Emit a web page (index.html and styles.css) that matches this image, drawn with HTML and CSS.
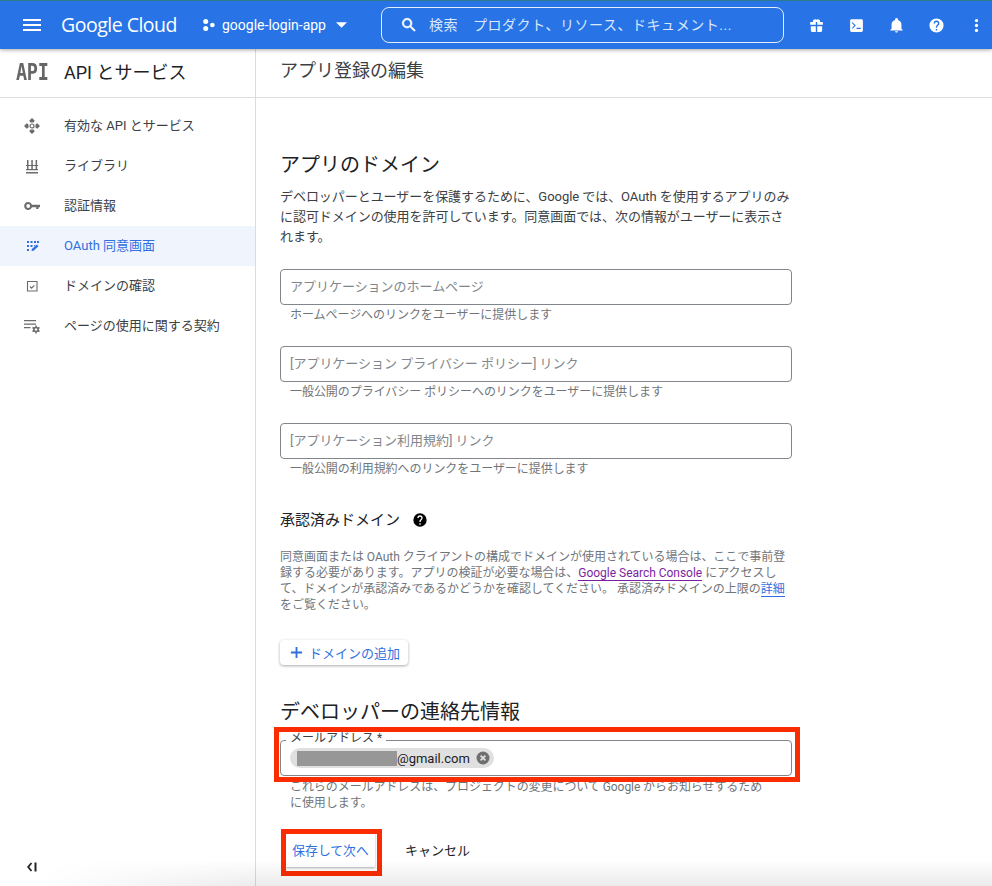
FILE: index.html
```html
<!DOCTYPE html>
<html lang="ja">
<head>
<meta charset="utf-8">
<title>アプリ登録の編集</title>
<link rel="stylesheet" href="styles.css">
</head>
<body>
<header class="topbar">
  <svg class="menu-icon" viewBox="0 0 18 12"><path d="M0 0h18v2H0zM0 5h18v2H0zM0 10h18v2H0z" fill="#fff"/></svg>
  <span class="logo">Google Cloud</span>
  <div class="project">
    <svg class="project-icon" viewBox="0 0 14 14"><circle cx="4" cy="3.200" r="2.700" fill="#fff"/><circle cx="4" cy="10.800" r="2.700" fill="#fff"/><circle cx="11.200" cy="7" r="2.500" fill="#fff"/></svg>
    <span class="project-name">google-login-app</span>
    <svg class="caret" viewBox="0 0 12 6"><path d="M0 0h12L6 6z" fill="#fff"/></svg>
  </div>
  <div class="search">
    <svg class="search-icon" viewBox="0 0 24 24"><path d="M15.500 14h-.79l-.28-.27A6.470 6.470 0 0 0 16 9.500 6.500 6.500 0 1 0 9.500 16c1.610 0 3.090-.59 4.230-1.570l.27.28v.79l5 4.990L20.490 19l-4.990-5zm-6 0C7.010 14 5 11.990 5 9.500S7.010 5 9.500 5 14 7.010 14 9.500 11.990 14 9.500 14z" fill="#fff" stroke="#fff" stroke-width=".8"/></svg>
    <span class="search-text">検索&emsp;プロダクト、リソース、ドキュメント...</span>
  </div>
  <div class="top-actions">
    <svg viewBox="0 0 24 24"><path d="M20 7h-3.200c.1-.3.200-.7.200-1 0-1.700-1.300-3-3-3-1 0-1.500.4-2 1-.5-.6-1-1-2-1-1.700 0-3 1.300-3 3 0 .3.100.7.200 1H4C2.900 7 3 8 3 9v2h8V7h2v4h8V9c0-1 .1-2-1-2zM4 13h7v8H6c-1.100 0-2-.9-2-2zM13 13h7v6c0 1.100-.9 2-2 2h-5z" fill="#fff"/></svg>
    <svg viewBox="0 0 24 24"><path fill-rule="evenodd" d="M5 3h14a2 2 0 0 1 2 2v14a2 2 0 0 1-2 2H5a2 2 0 0 1-2-2V5a2 2 0 0 1 2-2zm1.500 4.500L5.500 8.600 8.900 12l-3.400 3.400 1 1.100L11 12zM12 15v2h6v-2z" fill="#fff"/></svg>
    <svg viewBox="0 0 24 24"><path d="M12 22c1.100 0 2-.9 2-2h-4c0 1.100.9 2 2 2zm7-5v-6c0-3.300-1.800-5.900-5-6.700V3.500a2 2 0 0 0-4 0v.8C6.800 5.100 5 7.700 5 11v6l-2 1.500V19h18v-.5z" fill="#fff"/></svg>
    <svg viewBox="0 0 24 24"><path fill-rule="evenodd" d="M12 2a10 10 0 1 0 0 20 10 10 0 0 0 0-20zm1 17h-2v-2h2zm2.100-7.700l-.9.900c-.7.700-1.200 1.300-1.200 2.800h-2v-.5c0-1.100.5-2.100 1.200-2.800l1.200-1.300c.4-.3.600-.8.600-1.400a2 2 0 0 0-4 0H8a4 4 0 0 1 8 0c0 .9-.4 1.700-.900 2.300z" fill="#fff"/></svg>
    <svg viewBox="0 0 24 24"><circle cx="12" cy="5" r="2.300" fill="#fff"/><circle cx="12" cy="12" r="2.300" fill="#fff"/><circle cx="12" cy="19" r="2.300" fill="#fff"/></svg>
  </div>
</header>

<div class="layout">
  <aside class="sidebar">
    <div class="side-head">
      <span class="api-mark">API</span>
      <span class="side-title">API とサービス</span>
    </div>
    <nav class="side-nav">
      <a class="nav-item">
        <svg viewBox="0 0 18 18"><path fill="#6b6b6b" d="M9 1l2.800 2.800L10.400 5.500H7.600L6.200 3.800zM9 17l-2.800-2.800 1.400-1.700h2.800l1.400 1.700zM1 9l2.800-2.800 1.700 1.400v2.800l-1.700 1.400zM17 9l-2.800 2.800-1.700-1.400V7.600l1.700-1.400z"/><circle cx="9" cy="9" r="2" fill="none" stroke="#6b6b6b" stroke-width="1.200"/></svg>
        <span>有効な API とサービス</span>
      </a>
      <a class="nav-item">
        <svg viewBox="0 0 18 18"><path fill="#6b6b6b" d="M4 3h1.500v9H4zM8.300 3h1.500v9H8.300zM12.600 3h1.500v9h-1.500zM3 8h12v1H3zM3 12h12v1.200H3zM3 15h12v1.500H3z"/></svg>
        <span>ライブラリ</span>
      </a>
      <a class="nav-item">
        <svg viewBox="0 0 18 18"><path fill="#6b6b6b" fill-rule="evenodd" d="M5.200 5a4 4 0 0 1 3.800 2.700h8v2.600h-1.500V12h-2.300v-1.700H9A4 4 0 1 1 5.200 5zm0 2.100a1.900 1.900 0 1 0 0 3.800 1.900 1.900 0 0 0 0-3.800z"/></svg>
        <span>認証情報</span>
      </a>
      <a class="nav-item nav-active">
        <svg viewBox="0 0 18 18"><path fill="#2f6fde" d="M4 4h2v2H4zM7.500 4h2v2h-2zM11 4h2v2h-2zM14 4h2v2h-2zM4 8h2v2H4zM7.500 8h2v2h-2zM11 8h1.600L11 9.600zM4 12h2v2H4zM8.500 14l.4-2 5-4.500 1.600 1.700-5 4.500z"/></svg>
        <span>OAuth 同意画面</span>
      </a>
      <a class="nav-item">
        <svg viewBox="0 0 18 18"><path fill="none" stroke="#6b6b6b" stroke-width="1.100" d="M4.500 4.500h9.500v9.500H4.500zM7 9.500l1.600 1.600 2.800-2.800"/></svg>
        <span>ドメインの確認</span>
      </a>
      <a class="nav-item">
        <svg viewBox="0 0 18 18"><path fill="#6b6b6b" d="M1 3h12v1.300H1zM1 6.500h12v1.300H1zM1 10h6.500v1.300H1z"/><path stroke="#6b6b6b" stroke-width="1.500" d="M13 8.500v8M9.500 10.500l7 4M16.500 10.500l-7 4"/><circle cx="13" cy="12.500" r="2.800" fill="#6b6b6b"/><circle cx="13" cy="12.500" r="1.200" fill="#fff"/></svg>
        <span>ページの使用に関する契約</span>
      </a>
    </nav>
    <svg class="collapse" viewBox="0 0 10 10"><path d="M4.500 1L1.200 5l3.300 4" fill="none" stroke="#222" stroke-width="1.800"/><path d="M8.500 .5v9" stroke="#222" stroke-width="2"/></svg>
  </aside>

  <main class="main">
    <div class="page-head">アプリ登録の編集</div>
    <div class="form">
      <h2 class="section-title section-first">アプリのドメイン</h2>
      <p class="intro">デベロッパーとユーザーを保護するために、Google では、OAuth を使用するアプリのみに認可ドメインの使用を許可しています。同意画面では、次の情報がユーザーに表示されます。</p>

      <div class="field">
        <div class="input">アプリケーションのホームページ</div>
        <div class="hint">ホームページへのリンクをユーザーに提供します</div>
      </div>
      <div class="field">
        <div class="input">[アプリケーション プライバシー ポリシー] リンク</div>
        <div class="hint">一般公開のプライバシー ポリシーへのリンクをユーザーに提供します</div>
      </div>
      <div class="field">
        <div class="input">[アプリケーション利用規約] リンク</div>
        <div class="hint">一般公開の利用規約へのリンクをユーザーに提供します</div>
      </div>

      <div class="auth-head">
        <span>承認済みドメイン</span>
        <svg viewBox="0 0 24 24"><path fill-rule="evenodd" d="M12 2a10 10 0 1 0 0 20 10 10 0 0 0 0-20zm1 17h-2v-2h2zm2.100-7.700l-.9.900c-.7.700-1.200 1.300-1.200 2.800h-2v-.5c0-1.100.5-2.100 1.200-2.800l1.200-1.300c.4-.3.600-.8.600-1.400a2 2 0 0 0-4 0H8a4 4 0 0 1 8 0c0 .9-.4 1.700-.9 2.300z" fill="#000"/></svg>
      </div>
      <p class="auth-text">同意画面または OAuth クライアントの構成でドメインが使用されている場合は、ここで事前登録する必要があります。アプリの検証が必要な場合は、<a class="link-visited">Google Search Console</a> にアクセスして、ドメインが承認済みであるかどうかを確認してください。 承認済みドメインの上限の<a class="link">詳細</a>をご覧ください。</p>

      <button class="add-btn">
        <svg viewBox="0 0 14 14"><path d="M6 1h2v5h5v2H8v5H6V8H1V6h5z" fill="#2f6fde"/></svg>
        <span>ドメインの追加</span>
      </button>

      <h2 class="section-title contact-title">デベロッパーの連絡先情報</h2>

      <div class="email-field">
        <span class="float-label">メールアドレス *</span>
        <div class="chip">
          <span class="redact"></span>
          <span class="chip-text">@gmail.com</span>
          <svg viewBox="0 0 14 14"><circle cx="7" cy="7" r="6.500" fill="#6f6f6f"/><path d="M4.600 4.600l4.800 4.800M9.400 4.600l-4.800 4.800" stroke="#e0e0e0" stroke-width="1.700"/></svg>
        </div>
        <span class="mark mark-email"></span>
      </div>
      <div class="hint hint-email">これらのメールアドレスは、プロジェクトの変更について Google からお知らせするために使用します。</div>

      <div class="actions">
        <button class="save-btn">保存して次へ<span class="mark mark-save"></span></button>
        <button class="cancel-btn">キャンセル</button>
      </div>
    </div>
  </main>
</div>
<div class="bottom-fade"></div>
</body>
</html>
```

FILE: styles.css
```css
* { box-sizing: border-box; }
html, body { margin: 0; padding: 0; height: 886px; overflow: hidden; }
body {
  position: relative;
  background: #fff;
  color: #202124;
  font-family: Roboto, "Noto Sans CJK JP", sans-serif;
  font-size: 13px;
}
.topbar {
  position: relative;
  z-index: 3;
  height: 49px;
  background: #2874e6;
  border-top: 1px solid #2c7a8a;
  box-shadow: 0 1px 4px rgba(0, 0, 0, .35);
  display: flex;
  align-items: center;
  color: #fff;
}
.menu-icon { width: 18px; height: 12px; margin-left: 23px; flex: none; }
.logo {
  margin-left: 20px;
  width: 118px;
  padding-bottom: 2px;
  font-family: "Open Sans", sans-serif;
  font-size: 19.500px;
  letter-spacing: -.5px;
  white-space: nowrap;
  flex: none;
}
.project { display: flex; align-items: center; margin-left: 23px; font-size: 14px; flex: none; width: 144px; }
.project-name { white-space: nowrap; }
.project-icon { width: 13px; height: 14px; margin-right: 7px; flex: none; }
.caret { width: 11px; height: 6px; margin-left: 10px; flex: none; }
.search {
  margin-left: 35px;
  width: 403px;
  height: 36px;
  border: 1px solid #e3edfb;
  border-radius: 8px;
  display: flex;
  align-items: center;
  flex: none;
}
.search-icon { width: 18px; height: 18px; margin-left: 18px; flex: none; }
.search-text { margin-left: 11px; padding-bottom: 2px; font-size: 14px; color: #dbe7fb; letter-spacing: .55px; white-space: nowrap; }
.top-actions { display: flex; margin-left: 24px; gap: 23px; align-items: center; }
.top-actions svg { width: 17px; height: 17px; flex: none; }

.layout { display: flex; height: 837px; }
.sidebar {
  position: relative;
  width: 256px;
  flex: none;
  border-right: 1px solid #dadce0;
}
.side-head {
  height: 49px;
  border-bottom: 1px solid #dadce0;
  display: flex;
  align-items: center;
}
.api-mark {
  margin-left: 16px;
  width: 32px;
  font-family: "DejaVu Sans Mono", monospace;
  font-weight: 700;
  font-size: 18.500px;
  letter-spacing: -.3px;
  color: #666;
  padding-bottom: 2px;
  transform: scaleY(1.2);
}
.side-title { margin-left: 16px; padding-bottom: 4px; font-size: 18px; color: #202124; }
.side-nav { display: flex; flex-direction: column; padding-top: 8px; }
.nav-item {
  height: 40px;
  display: flex;
  align-items: center;
  padding-left: 23px;
  font-size: 13px;
  color: #3c4043;
}
.nav-item span { padding-bottom: 3px; }
.nav-item svg { width: 18px; height: 18px; margin-right: 23px; flex: none; }
.nav-active { background: #eff4fd; color: #2f6fde; }
.collapse { position: absolute; left: 27px; top: 813px; width: 10px; height: 10px; }

.main { flex: 1; min-width: 0; }
.page-head {
  height: 49px;
  border-bottom: 1px solid #dadce0;
  padding-left: 24px;
  line-height: 44px;
  font-size: 18px;
  color: #3c4043;
}
.form { width: 536px; margin-left: 24px; }
.section-title { margin: 0; font-weight: 400; font-size: 20px; line-height: 28px; color: #202124; }
.section-first { margin-top: 53px; }
.intro { margin: 8px 0 0; font-size: 13px; line-height: 20px; color: #3c4043; letter-spacing: -.05px; width: 515px; }
.field { margin-top: 22px; width: 512px; }
.field + .field { margin-top: 21px; }
.input {
  height: 36px;
  border: 1px solid #80868b;
  border-radius: 4px;
  padding-left: 9px;
  line-height: 34px;
  font-size: 13px;
  color: #80868b;
  letter-spacing: -.02px;
}
.hint { padding-left: 10px; font-size: 12px; line-height: 20px; color: #70757a; letter-spacing: -.05px; }
.auth-head { display: flex; align-items: center; margin-top: 31px; font-size: 15px; line-height: 20px; color: #202124; }
.auth-head svg { width: 16px; height: 16px; margin-left: 12px; }
.auth-text { margin: 19px 0 0; width: 506px; font-size: 12px; line-height: 16px; color: #70757a; letter-spacing: -.02px; }
.link-visited { color: #7b1fa2; border-bottom: 1px solid #7b1fa2; }
.link { color: #2f6fde; border-bottom: 1px solid #2f6fde; }
.add-btn {
  display: flex;
  align-items: center;
  margin-top: 27px;
  height: 25px;
  width: 128px;
  padding: 0 0 0 10px;
  background: #fff;
  border: 0;
  border-radius: 4px;
  box-shadow: 0 1px 3px rgba(60, 64, 67, .45);
  color: #2f6fde;
  font: inherit;
  font-size: 13px;
}
.add-btn svg { width: 13px; height: 13px; margin-right: 6px; flex: none; }
.contact-title { margin-top: 33px; }
.email-field {
  position: relative;
  margin-top: 14px;
  width: 512px;
  height: 36px;
  border: 1px solid #80868b;
  border-radius: 4px;
  display: flex;
  align-items: center;
  padding-left: 9px;
}
.float-label {
  position: absolute;
  left: 5px;
  top: -11px;
  padding: 0 4px;
  background: #fff;
  font-size: 12px;
  line-height: 16px;
  color: #3c4043;
}
.chip {
  display: flex;
  align-items: center;
  height: 20px;
  border-radius: 10px;
  background: #e0e0e0;
  padding: 0 4px 0 7px;
}
.redact { width: 100px; height: 15px; background: #979797; }
.chip-text { font-size: 13px; color: #202124; margin-right: 6px; }
.chip svg { width: 14px; height: 14px; }
.mark { position: absolute; border: 5px solid #fb2c00; pointer-events: none; }
.mark-email { left: -7px; top: -14px; width: 526px; height: 55px; }
.hint-email { width: 490px; line-height: 16px; margin-top: 3px; letter-spacing: -.07px; }
.actions { display: flex; align-items: center; margin-top: 20px; }
.save-btn {
  position: relative;
  width: 89px;
  height: 36px;
  margin-left: 6px;
  padding: 0;
  border: 0;
  background: #fff;
  color: #2f6fde;
  font: inherit;
  font-size: 12.800px;
  box-shadow: 0 1px 2px rgba(60, 64, 67, .4);
}
.mark-save { left: -5px; top: -2px; width: 101px; height: 47px; }
.cancel-btn { margin-left: 30px; border: 0; background: none; padding: 0; color: #202124; font: inherit; font-size: 13px; }
.bottom-fade {
  position: absolute;
  left: 0; right: 0; bottom: 0;
  height: 26px;
  z-index: 2;
  pointer-events: none;
  background: linear-gradient(to bottom, rgba(0,0,0,0), rgba(0,0,0,.08));
  -webkit-mask-image: linear-gradient(to right, transparent 40px, #000 260px);
  mask-image: linear-gradient(to right, transparent 40px, #000 260px);
}
```
